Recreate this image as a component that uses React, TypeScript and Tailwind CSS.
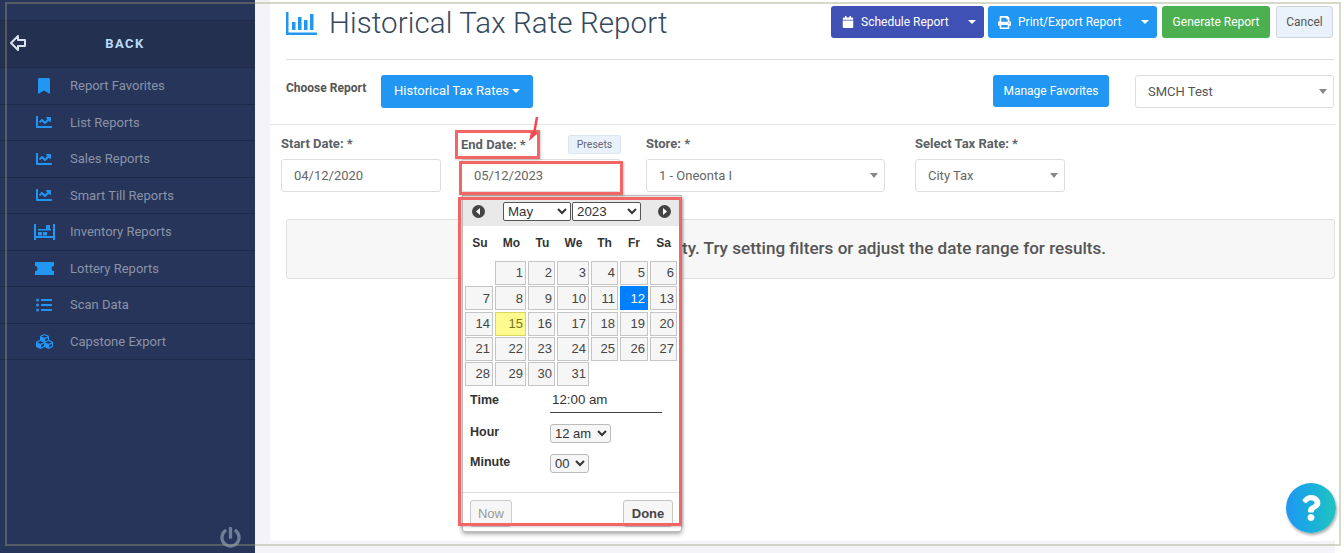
import React from "react";
import {
  FaBookmark,
  FaCalendar,
  FaChartLine,
  FaCubes,
  FaListUl,
  FaPowerOff,
  FaPrint,
  FaQuestion,
} from "react-icons/fa";

const InventoryIcon = () => (
  <svg width="21" height="16" viewBox="0 0 21 16" fill="#2196f3">
    <rect x="0" y="0" width="2" height="16" />
    <rect x="19" y="0" width="2" height="16" />
    <rect x="0" y="12" width="21" height="2" />
    <rect x="12" y="1" width="4" height="4" />
    <rect x="4" y="5" width="13" height="1.5" />
    <rect x="4" y="8" width="4" height="3.5" />
    <rect x="9" y="8" width="4" height="3.5" />
  </svg>
);

const TicketIcon = () => (
  <svg width="19" height="13" viewBox="0 0 19 13" fill="#2196f3">
    <path d="M0 0 H19 V4 A2.5 2.5 0 0 0 19 9 V13 H0 V9 A2.5 2.5 0 0 0 0 4 Z" />
  </svg>
);

const BackIcon = () => (
  <svg width="18" height="18" viewBox="0 0 18 18" fill="none" stroke="#d8e2ee" strokeWidth="2">
    <path d="M9 2 L2 9 L9 16 V12 H16 V6 H9 Z" strokeLinejoin="round" />
  </svg>
);

const BarsIcon = () => (
  <svg width="31" height="24" viewBox="0 0 31 24" fill="#2196f3">
    <rect x="0" y="1" width="2.5" height="23" />
    <rect x="0" y="21.5" width="31" height="2.5" />
    <rect x="6" y="11" width="3.5" height="8" />
    <rect x="12" y="6" width="3.5" height="13" />
    <rect x="18" y="9" width="3.5" height="10" />
    <rect x="24" y="3" width="3.5" height="16" />
  </svg>
);

const NavCircle = ({ dir }: { dir: "left" | "right" }) => (
  <svg width="13" height="13" viewBox="0 0 13 13">
    <circle cx="6.5" cy="6.5" r="6.5" fill="#444" />
    <path d={dir === "left" ? "M8 3 L4 6.5 L8 10 Z" : "M5 3 L9 6.5 L5 10 Z"} fill="#fff" />
  </svg>
);

const Caret = () => (
  <span className="inline-block h-0 w-0 border-x-[4px] border-t-[4px] border-x-transparent border-t-white" />
);

const SelectCaret = () => (
  <span className="inline-block h-0 w-0 border-x-[4px] border-t-[5px] border-x-transparent border-t-[#888]" />
);

const menu = [
  { label: "Report Favorites", icon: <FaBookmark size={16} /> },
  { label: "List Reports", icon: <FaChartLine size={16} /> },
  { label: "Sales Reports", icon: <FaChartLine size={16} /> },
  { label: "Smart Till Reports", icon: <FaChartLine size={16} /> },
  { label: "Inventory Reports", icon: <InventoryIcon /> },
  { label: "Lottery Reports", icon: <TicketIcon /> },
  { label: "Scan Data", icon: <FaListUl size={16} /> },
  { label: "Capstone Export", icon: <FaCubes size={17} /> },
];

const weeks = [
  [null, 1, 2, 3, 4, 5, 6],
  [7, 8, 9, 10, 11, 12, 13],
  [14, 15, 16, 17, 18, 19, 20],
  [21, 22, 23, 24, 25, 26, 27],
  [28, 29, 30, 31, null, null, null],
];

const Sidebar = () => (
  <aside className="flex h-[553px] w-[255px] shrink-0 flex-col bg-[#27355a]">
    <div className="h-[21px] border-b border-[#1e2a49]" />
    <div className="relative flex h-[47px] items-center justify-center border-b border-[#1e2a49] bg-[#24304f] pr-[5px]">
      <span className="absolute left-[9px] top-[13px]">
        <BackIcon />
      </span>
      <span className="text-[13px] font-bold tracking-[1.5px] text-[#b9dcfb]">BACK</span>
    </div>
    {menu.map((item) => (
      <div key={item.label} className="flex h-[36.5px] items-center border-b border-[#1e2a49]">
        <span className="flex w-[70px] justify-center pl-[18px] text-[#2196f3]">{item.icon}</span>
        <span className="text-[13px] text-[#8b93a7]">{item.label}</span>
      </div>
    ))}
    <div className="flex flex-1 items-end justify-end pb-[5px] pr-[14px] text-[#6f7f98]">
      <FaPowerOff size={21} />
    </div>
  </aside>
);

const Header = () => (
  <div className="ml-[16px] mr-[1px] flex h-[60px] items-start justify-between border-b border-[#dddddd]">
    <div className="flex items-center pt-[7px]">
      <BarsIcon />
      <h1 className="ml-[12px] text-[29.5px] leading-[32px] font-light tracking-[0.1px] text-[#34495e]">
        Historical Tax Rate Report
      </h1>
    </div>
    <div className="flex items-center pt-[6px] text-[12px] text-white">
      <button className="flex h-[32px] w-[153px] items-center rounded-[3px] bg-[#3f51b5] pl-[11px]">
        <FaCalendar size={12} />
        <span className="ml-[7px]">Schedule Report</span>
        <span className="ml-[19px] flex"><Caret /></span>
      </button>
      <button className="ml-[4px] flex h-[32px] w-[169px] items-center rounded-[3px] bg-[#2196f3] pl-[10px]">
        <FaPrint size={13} />
        <span className="ml-[7px]">Print/Export Report</span>
        <span className="ml-[20px] flex"><Caret /></span>
      </button>
      <button className="ml-[5px] h-[32px] w-[108px] rounded-[3px] bg-[#4caf50]">Generate Report</button>
      <button className="ml-[6px] mr-[1px] h-[32px] w-[57px] rounded-[3px] border border-[#cfd4d8] bg-[#e9f2fb] text-[#555]">
        Cancel
      </button>
    </div>
  </div>
);

const ChooseRow = () => (
  <div className="flex h-[65px] items-start border-b border-[#e6e6e6] pl-[16px] pr-[1px] pt-[15px]">
    <span className="mt-[4px] w-[95px] text-[12px] font-bold text-[#555]">Choose Report</span>
    <button className="flex h-[33px] w-[152px] items-center justify-center gap-[3px] rounded-[3px] bg-[#2196f3] pb-[1px] text-[13px] text-white">
      Historical Tax Rates <Caret />
    </button>
    <button className="ml-auto h-[32px] w-[116px] rounded-[3px] bg-[#2196f3] text-[12px] text-white">
      Manage Favorites
    </button>
    <div className="ml-[26px] flex h-[33px] w-[199px] items-center justify-between rounded-[3px] border border-[#dddddd] pl-[12px] pr-[6px] text-[13px] text-[#555]">
      SMCH Test <SelectCaret />
    </div>
  </div>
);

const Label = ({ children }: { children: React.ReactNode }) => (
  <label className="block text-[13px] leading-[18px] font-bold text-[#5b5f66]">{children}</label>
);

const Field = ({ value, select }: { value: string; select?: boolean }) => (
  <div
    className={`mt-[6px] flex h-[33px] items-center rounded-[3px] border border-[#dddddd] pl-[12px] text-[13px] text-[#666] ${
      select ? "justify-between pr-[6px]" : ""
    }`}
  >
    {value}
    {select && <SelectCaret />}
  </div>
);

const Filters = () => (
  <div className="flex pl-[11px] pt-[10px]">
    <div className="w-[160px]">
      <Label>Start Date: *</Label>
      <Field value="04/12/2020" />
    </div>
    <div className="ml-[20px] w-[160px]">
      <div className="flex items-center justify-between">
        <Label>End Date: *</Label>
        <span className="flex h-[19px] w-[53px] items-center justify-center rounded-[2px] border border-[#dbe6ef] bg-[#e9f2fb] text-[10.5px] text-[#667]">
          Presets
        </span>
      </div>
      <div className="-mt-[1px]">
        <Field value="05/12/2023" />
      </div>
    </div>
    <div className="ml-[25px] w-[239px]">
      <Label>Store: *</Label>
      <Field value="1 - Oneonta I" select />
    </div>
    <div className="ml-[30px] w-[150px]">
      <Label>Select Tax Rate: *</Label>
      <Field value="City Tax" select />
    </div>
  </div>
);

const Calendar = () => (
  <div className="absolute left-[462px] top-[195px] h-[337px] w-[220px] rounded-b-[3px] border border-[#bbbbbb] bg-white font-['Liberation_Sans',Arial,sans-serif] text-[#333] shadow-[0_2px_4px_rgba(0,0,0,0.35)]">
    <div className="flex h-[30px] items-center bg-[#e9e9e9] pl-[9px]">
      <NavCircle dir="left" />
      <select defaultValue="May" className="ml-[18px] h-[19px] w-[68px] rounded-[2px] border border-[#555] bg-white text-[13.3px]">
        <option>May</option>
      </select>
      <select defaultValue="2023" className="ml-[1px] mr-[17px] h-[19px] w-[69px] rounded-[2px] border border-[#555] bg-white text-[13.3px]">
        <option>2023</option>
      </select>
      <NavCircle dir="right" />
    </div>
    <div className="mt-[8px] grid grid-cols-[30px_33px_29px_33px_29px_30px_29px] pl-[2px] text-center text-[12px] leading-[18px] font-bold">
      {["Su", "Mo", "Tu", "We", "Th", "Fr", "Sa"].map((d) => (
        <span key={d}>{d}</span>
      ))}
    </div>
    <div className="mt-[9px] grid grid-cols-[28px_31px_27px_32px_27px_28px_27px] gap-x-[2px] gap-y-[1.25px] pl-[2px] text-[13px]">
      {weeks.flat().map((d, i) =>
        d === null ? (
          <span key={i} className="h-[24px]" />
        ) : (
          <span
            key={i}
            className={`flex h-[24px] items-center justify-end border pr-[2px] ${
              d === 12
                ? "border-[#007fff] bg-[#007fff] text-white"
                : d === 15
                  ? "border-[#dad55e] bg-[#fffa90] text-[#777620]"
                  : "border-[#c5c5c5] bg-[#f6f6f6] text-[#454545]"
            }`}
          >
            {d}
          </span>
        )
      )}
    </div>
    <div className="mt-[1px] flex h-[26px] items-center pl-[7px] text-[12.5px] font-bold">
      <span className="w-[80px]">Time</span>
      <span className="flex h-[26px] w-[112px] items-center border-b border-[#444] pl-[2px] text-[13.3px] font-normal">
        12:00 am
      </span>
    </div>
    <div className="mt-[10px] flex h-[20px] items-center pl-[7px] text-[12.5px] font-bold">
      <span className="w-[80px] pb-[2px]">Hour</span>
      <select defaultValue="12 am" className="h-[19px] w-[61px] rounded-[3px] border border-[#bbb] bg-[#f6f6f6] text-[13px] font-normal">
        <option>12 am</option>
      </select>
    </div>
    <div className="mt-[10px] flex h-[20px] items-center pl-[7px] text-[12.5px] font-bold">
      <span className="w-[80px] pb-[2px]">Minute</span>
      <select defaultValue="00" className="h-[19px] w-[39px] rounded-[3px] border border-[#bbb] bg-[#f6f6f6] text-[13px] font-normal">
        <option>00</option>
      </select>
    </div>
    <div className="mt-[19px] flex items-start justify-between border-t border-[#ddd] pl-[7px] pr-[8px] pt-[7px] text-[13px]">
      <button className="h-[27px] w-[42px] rounded-[3px] border border-[#ccc] bg-[#f6f6f6] text-[#999]">Now</button>
      <button className="h-[27px] w-[50px] rounded-[3px] border border-[#c5c5c5] bg-[#f6f6f6] font-bold text-[#454545]">Done</button>
    </div>
  </div>
);

const App = () => (
  <div className="relative flex h-[553px] w-[1344px] overflow-hidden bg-[#f3f3f8] font-['Roboto',sans-serif]">
    <Sidebar />
    <main className="ml-[15px] h-[541px] w-[1065px] rounded-b-[3px] bg-white">
      <Header />
      <ChooseRow />
      <Filters />
      <div className="ml-[16px] mt-[27px] flex h-[60px] items-center rounded-[3px] border border-[#e0e0e0] bg-[#f7f7f7] pl-[395px] text-[17.1px] font-medium text-[#555]">
        ty. Try setting filters or adjust the date range for results.
      </div>
    </main>
    <div className="flex-1 bg-white" />

    <Calendar />

    {/* red annotations from the screenshot */}
    <div className="pointer-events-none absolute left-[455px] top-[130px] h-[29px] w-[85px] border-[3px] border-[#f26666] shadow-[1px_1px_2px_rgba(0,0,0,0.2)]" />
    <div className="pointer-events-none absolute left-[459px] top-[161px] h-[34px] w-[164px] border-[3px] border-[#f26666] shadow-[1px_1px_2px_rgba(0,0,0,0.2)]" />
    <div className="pointer-events-none absolute left-[458px] top-[197px] h-[329px] w-[224px] border-[3px] border-[#f26666] shadow-[1px_1px_2px_rgba(0,0,0,0.2)]" />
    <svg className="pointer-events-none absolute left-[526px] top-[114px]" width="16" height="30" viewBox="0 0 16 30">
      <path d="M11 3 L8 20" stroke="#f0484e" strokeWidth="2.5" fill="none" />
      <path d="M3 27 L12 19 L5 18 Z" fill="#f0484e" />
    </svg>

    <div className="pointer-events-none absolute left-[5px] top-[2px] h-[544px] w-[1336px] border-2 border-[#9d9d75]/40" />

    <button className="absolute left-[1286px] top-[483px] flex h-[50px] w-[50px] items-center justify-center rounded-full bg-gradient-to-r from-[#2196f3] to-[#22c4c0] text-white shadow-[1px_2px_3px_rgba(0,0,0,0.35)]">
      <FaQuestion size={26} />
    </button>
  </div>
);

export default App;
